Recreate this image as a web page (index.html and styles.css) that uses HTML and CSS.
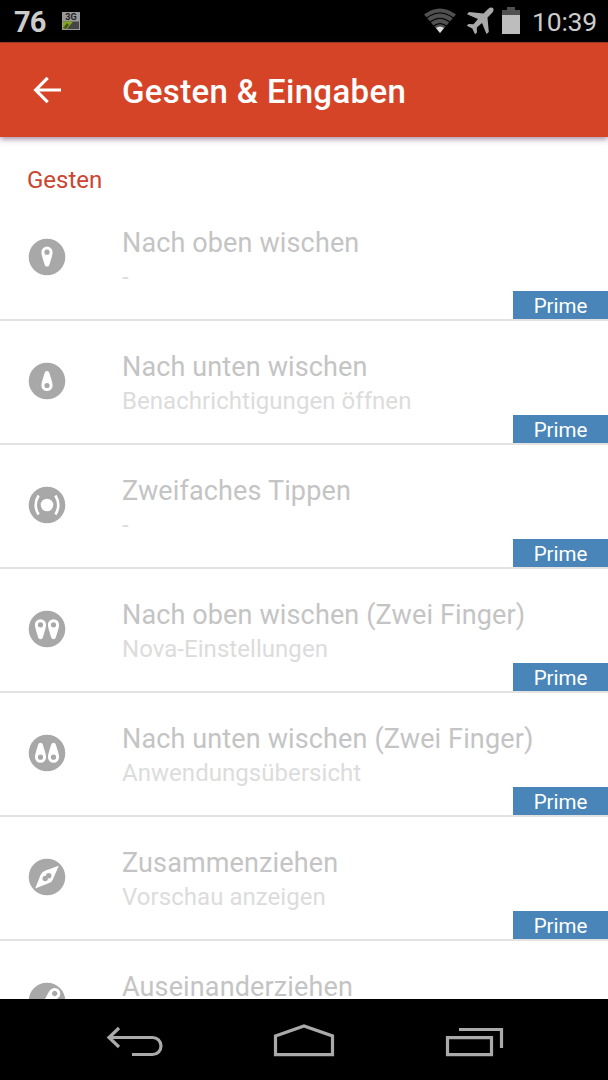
FILE: index.html
```
<!DOCTYPE html>
<html lang="de">
<head>
<meta charset="utf-8">
<title>Gesten &amp; Eingaben</title>
<link rel="stylesheet" href="styles.css">
</head>
<body>
<svg class="defs" width="0" height="0">
  <defs>
    <path id="pin" fill-rule="evenodd" d="M-5.6 0A5.6 5.6 0 0 1 5.6 0C5.6 1.6 5.2 3 4.800 4.500L2.300 12.800Q1.800 14.400 0 14.400T-2.300 12.800L-4.800 4.500C-5.200 3-5.600 1.600-5.600 0ZM-2.600 0A2.600 2.600 0 1 0 2.600 0A2.600 2.600 0 1 0-2.600 0Z"/>
  </defs>
</svg>
<div class="screen">
  <div class="status">
    <span class="percent">76</span>
    <svg class="signal" width="18" height="18" viewBox="0 0 18 18">
      <rect width="18" height="18" fill="#999"/>
      <rect x="1" y="9.500" width="16" height="7.500" fill="#454545"/>
      <path d="M1 9.500H11L5 17H1Z" fill="#86a51f"/>
      <path d="M1 16L5 11L7 13L4 17Z" fill="#465620"/>
      <text x="9" y="8.300" text-anchor="middle" class="net">3G</text>
    </svg>
    <svg class="wifi" width="34" height="26" viewBox="0 0 34 26">
      <path d="M1 6.500Q17-5.500 33 6.500L17 25Z" fill="#505050"/>
      <path d="M3.500 10Q17 0 30.500 10M7 14Q17 6.500 27 14M10.500 18.300Q17 13 23.500 18.300" fill="none" stroke="#000" stroke-width="1.200"/>
      <path d="M13 20Q17 17 21 20L17 25Z" fill="#ddd"/>
    </svg>
    <svg class="plane" width="28" height="28" viewBox="0 0 28 28">
      <path d="M27 1C25.500-.2 23.500.5 22 2L17.500 6.500L3 5L1 7.300L12 12L7.500 17.300L2.500 17L.8 18.800L6.300 21.500L9 27.200L11 25.500L10.800 20.500L16 16L20.500 27L22.800 25L21.500 10.500L26 6C27.500 4.500 28 2.500 27 1Z" fill="#a9a9a9"/>
    </svg>
    <svg class="battery" width="18" height="28" viewBox="0 0 18 28">
      <path d="M0 3H5V0H13V3H18V9H0Z" fill="#505050"/>
      <rect y="8" width="18" height="19" fill="#bdbdbd"/>
    </svg>
    <span class="clock">10:39</span>
  </div>
  <header class="bar">
    <svg class="back" width="30" height="30" viewBox="0 0 30 30"><path d="M28 15H3M14.700 2.800L2.700 15L14.700 27.200" fill="none" stroke="#fff" stroke-width="3.200"/></svg>
    <h1>Gesten &amp; Eingaben</h1>
  </header>
  <main class="content">
    <h2>Gesten</h2>
    <div class="row">
      <svg class="icon" viewBox="-19 -19 38 38"><circle r="18.300"/><use href="#pin" y="-4.800"/></svg>
      <div class="label"><p class="title">Nach oben wischen</p><p class="sub">-</p></div>
      <span class="prime">Prime</span>
    </div>
    <div class="row">
      <svg class="icon" viewBox="-19 -19 38 38"><circle r="18.300"/><use href="#pin" transform="translate(0 4.500) rotate(180)"/></svg>
      <div class="label"><p class="title">Nach unten wischen</p><p class="sub">Benachrichtigungen öffnen</p></div>
      <span class="prime">Prime</span>
    </div>
    <div class="row">
      <svg class="icon" viewBox="-19 -19 38 38"><circle r="18.300"/><circle class="dot" r="6.300"/><path class="arc" d="M-8.400-9.500Q-14.200 0-8.400 9.500M8.400-9.500Q14.200 0 8.400 9.500"/></svg>
      <div class="label"><p class="title">Zweifaches Tippen</p><p class="sub">-</p></div>
      <span class="prime">Prime</span>
    </div>
    <div class="row">
      <svg class="icon" viewBox="-19 -19 38 38"><circle r="18.300"/><use href="#pin" x="-6.500" y="-4.200"/><use href="#pin" x="6.500" y="-4.200"/></svg>
      <div class="label"><p class="title">Nach oben wischen (Zwei Finger)</p><p class="sub">Nova-Einstellungen</p></div>
      <span class="prime">Prime</span>
    </div>
    <div class="row">
      <svg class="icon" viewBox="-19 -19 38 38"><circle r="18.300"/><use href="#pin" transform="translate(-6.500 4.200) rotate(180)"/><use href="#pin" transform="translate(6.500 4.200) rotate(180)"/></svg>
      <div class="label"><p class="title">Nach unten wischen (Zwei Finger)</p><p class="sub">Anwendungsübersicht</p></div>
      <span class="prime">Prime</span>
    </div>
    <div class="row">
      <svg class="icon" viewBox="-19 -19 38 38"><circle r="18.300"/><path d="M11.800-11.300L5.800 2.500Q4.800 5.500 1.500 6.300L-11.800 11.500L-6.500-2Q-5-5.500-1.500-6.500Z"/><g class="hole"><circle cx="1.700" cy="-1.300" r="2.700"/><circle cx="-1.800" cy="1.500" r="2.700"/></g></svg>
      <div class="label"><p class="title">Zusammenziehen</p><p class="sub">Vorschau anzeigen</p></div>
      <span class="prime">Prime</span>
    </div>
    <div class="row">
      <svg class="icon" viewBox="-19 -19 38 38"><circle r="18.300"/><use href="#pin" transform="translate(7.700 -7.500) rotate(45)"/><use href="#pin" transform="translate(-7.700 7.500) rotate(225)"/></svg>
      <div class="label"><p class="title">Auseinanderziehen</p></div>
    </div>
  </main>
  <nav class="nav">
    <svg width="608" height="81" viewBox="0 999 608 81" fill="none" stroke="#aaa" stroke-width="3.200">
      <path d="M119 1028L109 1037.500L119 1047M109 1037.500H152.500A8.300 8.300 0 0 1 152.500 1054.500H132"/>
      <path d="M275.500 1036L304 1026L332.500 1036V1054.700H275.500Z"/>
      <path d="M447.500 1037.700H491.500V1054.700H447.500ZM459 1029.500H501.500V1048"/>
    </svg>
  </nav>
</div>
</body>
</html>
```
FILE: styles.css
```
* { box-sizing: border-box; }
body { margin: 0; font-family: Roboto, sans-serif; background: #fff; }
h1, h2, p { margin: 0; font-weight: 400; }
.defs { display: block; width: 0; height: 0; }
.screen { width: 608px; height: 1080px; display: flex; flex-direction: column; overflow: hidden; }
.status { flex: 0 0 42px; background: #000; display: flex; align-items: center; padding: 0 11px 0 14px; color: #ccc; }
.status svg { flex: none; }
.percent { flex: none; width: 48px; padding-top: 1px; font-size: 29px; font-weight: 700; letter-spacing: -1px; line-height: 40px; }
.net { font: bold 9px Roboto, sans-serif; fill: #222; }
.wifi { margin-left: 343px; }
.plane { margin-left: 9px; }
.battery { margin-left: 8px; }
.clock { margin-left: auto; font-size: 26.5px; line-height: 40px; padding-top: 2px; letter-spacing: -.2px; }
.bar { flex: 0 0 95px; background: #d64427; border-top: 1px solid #973b29; display: flex; align-items: center; padding: 3px 0 0 33px; color: #fff; box-shadow: 0 2px 6px rgba(60, 20, 60, .5); z-index: 1; }
.back { flex: none; margin-right: 59px; margin-top: -4px; }
h1 { font-size: 33px; font-weight: 500; line-height: 40px; letter-spacing: .35px; }
.content { flex: 1 1 0; min-height: 0; overflow: hidden; }
h2 { height: 60px; padding: 28px 0 0 27px; font-size: 24px; line-height: 30px; color: #cb4530; }
.row { height: 124px; display: flex; align-items: flex-start; border-bottom: 2px solid #e2e2e2; }
.row:last-child { height: 59px; border-bottom: 0; }
.icon { flex: none; width: 38px; height: 38px; margin: 41px 56px 0 28px; fill: #fff; }
.icon > circle:first-child, .hole { fill: #a8a8a8; }
.icon > .dot { fill: #fff; }
.arc { fill: none; stroke: #fff; stroke-width: 2.6; }
.label { flex: 1 1 0; min-width: 0; white-space: nowrap; padding-top: 29px; }
.title { font-size: 27px; line-height: 35px; letter-spacing: .13px; color: #c4c4c4; }
.sub { font-size: 24px; line-height: 32px; letter-spacing: .05px; color: #dcdcdc; }
.prime { flex: none; align-self: flex-end; width: 95px; height: 28px; background: #4985b8; color: #fff; font-size: 20.5px; line-height: 30px; text-align: center; }
.nav { flex: 0 0 81px; background: #000; }
.nav svg { display: block; }
```
